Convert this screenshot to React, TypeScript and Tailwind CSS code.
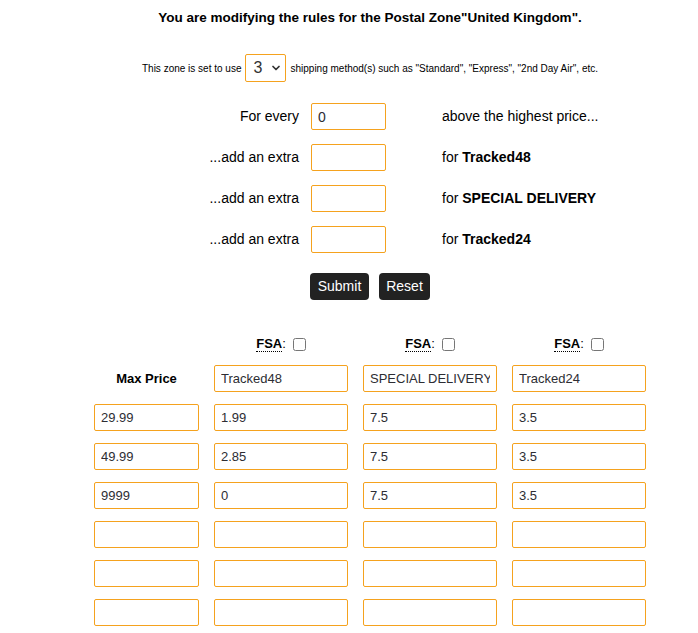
import { ChevronDown } from "lucide-react"

const extras = [
  { label: "...add an extra", name: "Tracked48" },
  { label: "...add an extra", name: "SPECIAL DELIVERY" },
  { label: "...add an extra", name: "Tracked24" },
]

const methods = ["Tracked48", "SPECIAL DELIVERY", "Tracked24"]

const rows = [
  ["29.99", "1.99", "7.5", "3.5"],
  ["49.99", "2.85", "7.5", "3.5"],
  ["9999", "0", "7.5", "3.5"],
  ["", "", "", ""],
  ["", "", "", ""],
  ["", "", "", ""],
]

const inputCls =
  "h-[27px] w-full rounded-[2px] border border-[#f5a21e] bg-white px-[6px] text-[13px] text-[#2d2d33] outline-none"

const Fsa = () => (
  <div className="flex h-[20px] items-center justify-center text-[13px] text-black">
    <abbr
      title="Free Shipping Allowed"
      className="font-bold no-underline border-b border-dotted border-black leading-[14px]"
    >
      FSA
    </abbr>
    <span>:</span>
    <input type="checkbox" className="ml-[7px] h-[13px] w-[13px]" />
  </div>
)

export default function App() {
  return (
    <div className="min-h-screen bg-white pl-[42px] font-['Liberation_Sans',Arial,sans-serif] text-black">
      {/* Heading */}
      <h1 className="pt-[8px] text-center text-[13.5px] font-bold leading-[20px]">
        You are modifying the rules for the Postal Zone"United Kingdom".
      </h1>

      {/* Methods count */}
      <div className="mt-[26px] flex items-center justify-center text-[10px]">
        <span>This zone is set to use</span>
        <div className="relative mx-[4px]">
          <select
            defaultValue="3"
            className="h-[28px] w-[41px] appearance-none rounded-[2px] border border-[#f5a21e] bg-white pl-[7px] text-[16px] text-[#333] outline-none"
          >
            <option>1</option>
            <option>2</option>
            <option>3</option>
            <option>4</option>
          </select>
          <ChevronDown
            className="pointer-events-none absolute right-[4px] top-[8px] h-[12px] w-[12px] text-[#333]"
            strokeWidth={3.5}
          />
        </div>
        <span>shipping method(s) such as "Standard", "Express", "2nd Day Air", etc.</span>
      </div>

      {/* Extra charges */}
      <div className="mt-[21px] flex flex-col gap-[14px] text-[14px]">
        <div className="flex h-[27px] items-center">
          <span className="w-[257px] text-right">For every</span>
          <input defaultValue="0" className={`${inputCls} ml-[12px] !w-[75px] !text-[14px]`} />
          <span className="ml-[56px]">above the highest price...</span>
        </div>
        {extras.map((e) => (
          <div key={e.name} className="flex h-[27px] items-center">
            <span className="w-[257px] text-right">{e.label}</span>
            <input className={`${inputCls} ml-[12px] !w-[75px]`} />
            <span className="ml-[56px] font-normal">
              for <span className="font-bold">{e.name}</span>
            </span>
          </div>
        ))}
      </div>

      {/* Buttons */}
      <div className="mt-[20px] flex justify-center gap-[10px]">
        <button className="h-[27px] w-[59px] rounded-[4px] bg-[#222] text-[14px] text-white">
          Submit
        </button>
        <button className="h-[27px] w-[51px] rounded-[4px] bg-[#222] text-[14px] text-white">
          Reset
        </button>
      </div>

      {/* Rates table */}
      <div className="mt-[34px] flex justify-center">
        <div className="grid grid-cols-[105px_134px_134px_134px] gap-x-[15px] gap-y-[12px]">
          <div className="-mb-[1px] h-[20px]" />
          {methods.map((m) => (
            <div key={m} className="-mb-[1px]">
              <Fsa />
            </div>
          ))}
          <div className="flex h-[27px] items-center justify-center text-[13px] font-bold">
            Max Price
          </div>
          {methods.map((m) => (
            <input key={m} defaultValue={m} className={inputCls} />
          ))}
          {rows.map((r, i) =>
            r.map((v, j) => (
              <input key={`${i}-${j}`} defaultValue={v} className={inputCls} />
            ))
          )}
        </div>
      </div>
    </div>
  )
}
